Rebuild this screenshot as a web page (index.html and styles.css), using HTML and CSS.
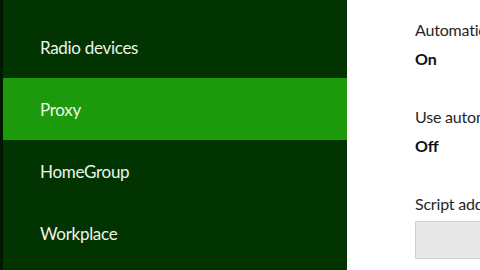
FILE: index.html
```html
<!DOCTYPE html>
<html>
<head>
<meta charset="utf-8">
<link rel="stylesheet" href="styles.css">
</head>
<body>
<div class="screen">
  <div class="edge"></div>
  <nav class="sidebar">
    <div class="item">Radio devices</div>
    <div class="item active">Proxy</div>
    <div class="item">HomeGroup</div>
    <div class="item">Workplace</div>
  </nav>
  <main class="content">
    <div class="setting">
      <div class="label">Automatically detect settings</div>
      <div class="value">On</div>
    </div>
    <div class="setting">
      <div class="label">Use automatic configuration script</div>
      <div class="value">Off</div>
    </div>
    <div class="setting">
      <div class="label">Script address</div>
      <div class="input"></div>
    </div>
  </main>
</div>
</body>
</html>
```
FILE: styles.css
```css
html, body {
  margin: 0;
  padding: 0;
  width: 480px;
  height: 270px;
  overflow: hidden;
}
.screen {
  display: flex;
  width: 480px;
  height: 270px;
  font-family: Lato, "Open Sans", sans-serif;
}
.edge {
  width: 3px;
  background: #001800;
}
.sidebar {
  width: 344px;
  background: #023402;
  padding-top: 16px;
  box-sizing: border-box;
  display: flex;
  flex-direction: column;
}
.item {
  height: 62px;
  display: flex;
  align-items: center;
  padding-left: 37px;
  font-size: 17px;
  letter-spacing: -0.3px;
  color: #eef5ea;
}
.item.active {
  background: #1c9a0b;
}
.content {
  flex: 1;
  background: #ffffff;
  padding-left: 68px;
  padding-top: 20px;
  overflow: hidden;
  white-space: nowrap;
}
.setting {
  margin-bottom: 37px;
}
.label {
  font-size: 16px;
  letter-spacing: -0.2px;
  color: #262626;
  line-height: 20px;
}
.value {
  font-size: 16px;
  font-weight: 700;
  color: #111;
  line-height: 22px;
  margin-top: 8px;
}
.input {
  margin-top: 7px;
  width: 100px;
  height: 36px;
  background: #e8e8e8;
  border: 1px solid #d0d0d0;
}
```
